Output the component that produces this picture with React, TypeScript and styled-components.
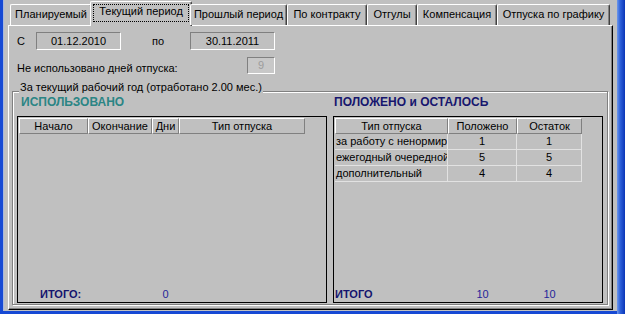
import React from 'react';
import styled, { createGlobalStyle } from 'styled-components';

const Global = createGlobalStyle`
  html, body { margin: 0; padding: 0; }
  body {
    background: #c0c0c0;
    font-family: "Liberation Sans", Arial, sans-serif;
    font-size: 11px;
    color: #000;
  }
`;

const WindowFrame = styled.div`
  width: 625px;
  height: 314px;
  box-sizing: border-box;
  padding: 0 8px 3px 3px;
  background:
    linear-gradient(90deg, transparent calc(100% - 8px), #6f98ea calc(100% - 8px), #2f63dc calc(100% - 5px), #0a36b8 100%),
    #1649d4;
`;

const Client = styled.div`
  height: 100%;
  box-sizing: border-box;
  background: #c0c0c0;
  border-left: 1px solid #a9b8dc;
  padding: 1px 4px 1px 4px;
  display: flex;
  flex-direction: column;
`;

const TabRow = styled.div`
  display: flex;
  align-items: flex-end;
  height: 24px;
  padding-left: 2px;
  position: relative;
  z-index: 1;
`;

const Tab = styled.div<{ $w: number; $active?: boolean }>`
  box-sizing: border-box;
  flex: none;
  width: ${(p) => (p.$active ? p.$w + 4 : p.$w)}px;
  height: ${(p) => (p.$active ? 25 : 21)}px;
  margin: ${(p) => (p.$active ? '0 -2px -1px -2px' : '0')};
  background: #c0c0c0;
  border-top: 1px solid #fff;
  border-left: 1px solid #fff;
  border-right: 1px solid #404040;
  box-shadow: inset -1px 0 #808080;
  border-radius: 2px 2px 0 0;
  padding: ${(p) => (p.$active ? '2px 0 0 0' : '3px 0 0 0')};
  text-align: center;
  line-height: 13px;
  white-space: nowrap;
`;

const FocusLabel = styled.span`
  display: block;
  box-sizing: border-box;
  margin: 0 2px;
  height: 18px;
  border: 1px dotted #000;
  line-height: 13px;
`;

const Panel = styled.div`
  flex: 1;
  box-sizing: border-box;
  border-top: 1px solid #fff;
  border-left: 1px solid #fff;
  border-right: 1px solid #000;
  border-bottom: 1px solid #000;
  box-shadow: inset -1px -1px #808080;
  padding: 6px 4px 4px 3px;
  display: flex;
  flex-direction: column;
`;

const DateRow = styled.div`
  display: grid;
  grid-template-columns: 19px 85px 31px 38px 85px;
  align-items: center;
  height: 18px;
  padding-left: 5px;
`;

const CountRow = styled.div`
  display: grid;
  grid-template-columns: 230px 28px;
  align-items: center;
  height: 17px;
  margin-top: 7px;
  padding-left: 5px;
`;

const Label = styled.span<{ $shift?: number }>`
  white-space: nowrap;
  position: relative;
  top: ${(p) => p.$shift ?? 0}px;
`;

const Field = styled.div<{ $disabled?: boolean }>`
  box-sizing: border-box;
  height: 100%;
  border-top: 1px solid #808080;
  border-left: 1px solid #808080;
  border-right: 1px solid #fff;
  border-bottom: 1px solid #fff;
  background: ${(p) => (p.$disabled ? '#c8c8c8' : '#c0c0c0')};
  color: ${(p) => (p.$disabled ? '#9c9c9c' : '#000')};
  text-align: center;
  line-height: ${(p) => (p.$disabled ? 15 : 16)}px;
`;

const GroupBox = styled.div`
  flex: 1;
  position: relative;
  margin-top: 17px;
  border: 1px solid #808080;
  box-shadow: inset 1px 1px #fff, 1px 1px #fff;
  padding: 3px 4px 1px 4px;
  display: grid;
  grid-template-columns: 310px 270px;
  column-gap: 6px;
`;

const Caption = styled.span`
  position: absolute;
  top: -11px;
  left: 6px;
  padding: 0 1px;
  background: #c0c0c0;
  line-height: 13px;
  white-space: nowrap;
`;

const Column = styled.div`
  display: flex;
  flex-direction: column;
`;

const Title = styled.div<{ $color: string; $indent: number }>`
  height: 14px;
  line-height: 14px;
  margin-bottom: 7px;
  padding-left: ${(p) => p.$indent}px;
  font-weight: bold;
  font-size: 12px;
  color: ${(p) => p.$color};
  white-space: nowrap;
`;

const Frame = styled.div`
  flex: 1;
  border: 1px solid #000;
  padding: 1px 0 0 1px;
  display: flex;
  flex-direction: column;
`;

const GridRow = styled.div<{ $cols: string }>`
  display: grid;
  grid-template-columns: ${(p) => p.$cols};
`;

const HeadCell = styled.div`
  box-sizing: border-box;
  height: 16px;
  border-top: 1px solid #fff;
  border-left: 1px solid #fff;
  border-right: 1px solid #808080;
  border-bottom: 1px solid #808080;
  text-align: center;
  line-height: 14px;
  white-space: nowrap;
  overflow: hidden;
`;

const Cell = styled.div<{ $align?: 'left' | 'center' }>`
  box-sizing: border-box;
  height: 16px;
  border-right: 1px solid #e2e2e2;
  border-bottom: 1px solid #e2e2e2;
  text-align: ${(p) => p.$align ?? 'center'};
  padding-left: ${(p) => (p.$align === 'left' ? 1 : 0)}px;
  line-height: 15px;
  white-space: nowrap;
  overflow: hidden;
`;

const Footer = styled.div<{ $cols: string }>`
  margin-top: auto;
  margin-bottom: 1px;
  display: grid;
  grid-template-columns: ${(p) => p.$cols};
  height: 14px;
  line-height: 14px;
  align-items: center;
`;

const TotalLabel = styled.span<{ $indent: number }>`
  padding-left: ${(p) => p.$indent}px;
  font-weight: bold;
  font-size: 11px;
  color: #14146e;
  white-space: nowrap;
`;

const TotalValue = styled.span`
  text-align: center;
  color: #24249a;
`;

const tabs = [
  { label: 'Планируемый', w: 82 },
  { label: 'Текущий период', w: 98, active: true },
  { label: 'Прошлый период', w: 97 },
  { label: 'По контракту', w: 80 },
  { label: 'Отгулы', w: 50 },
  { label: 'Компенсация', w: 80 },
  { label: 'Отпуска по графику', w: 113 },
];

const LEFT_COLS = '69px 64px 27px 126px';
const RIGHT_COLS = '113px 69px 65px';

const rightRows = [
  { type: 'за работу с ненормир', given: '1', left: '1' },
  { type: 'ежегодный очередной', given: '5', left: '5' },
  { type: 'дополнительный', given: '4', left: '4' },
];

export default function App() {
  return (
    <>
      <Global />
      <WindowFrame>
        <Client>
          <TabRow>
            {tabs.map((t) => (
              <Tab key={t.label} $w={t.w} $active={t.active}>
                {t.active ? <FocusLabel>{t.label}</FocusLabel> : t.label}
              </Tab>
            ))}
          </TabRow>
          <Panel>
            <DateRow>
              <Label>С</Label>
              <Field>01.12.2010</Field>
              <span />
              <Label>по</Label>
              <Field>30.11.2011</Field>
            </DateRow>
            <CountRow>
              <Label $shift={2}>Не использовано дней отпуска:</Label>
              <Field $disabled>9</Field>
            </CountRow>
            <GroupBox>
              <Caption>За текущий рабочий год (отработано 2.00 мес.)</Caption>
              <Column>
                <Title $color="#2b8585" $indent={4}>ИСПОЛЬЗОВАНО</Title>
                <Frame>
                  <GridRow $cols={LEFT_COLS}>
                    <HeadCell>Начало</HeadCell>
                    <HeadCell>Окончание</HeadCell>
                    <HeadCell>Дни</HeadCell>
                    <HeadCell>Тип отпуска</HeadCell>
                  </GridRow>
                  <Footer $cols={LEFT_COLS}>
                    <TotalLabel $indent={21}>ИТОГО:</TotalLabel>
                    <span />
                    <TotalValue>0</TotalValue>
                    <span />
                  </Footer>
                </Frame>
              </Column>
              <Column>
                <Title $color="#16166e" $indent={1}>ПОЛОЖЕНО и ОСТАЛОСЬ</Title>
                <Frame>
                  <GridRow $cols={RIGHT_COLS}>
                    <HeadCell>Тип отпуска</HeadCell>
                    <HeadCell>Положено</HeadCell>
                    <HeadCell>Остаток</HeadCell>
                  </GridRow>
                  {rightRows.map((r) => (
                    <GridRow key={r.type} $cols={RIGHT_COLS}>
                      <Cell $align="left">{r.type}</Cell>
                      <Cell>{r.given}</Cell>
                      <Cell>{r.left}</Cell>
                    </GridRow>
                  ))}
                  <Footer $cols={RIGHT_COLS}>
                    <TotalLabel $indent={0}>ИТОГО</TotalLabel>
                    <TotalValue>10</TotalValue>
                    <TotalValue>10</TotalValue>
                  </Footer>
                </Frame>
              </Column>
            </GroupBox>
          </Panel>
        </Client>
      </WindowFrame>
    </>
  );
}
